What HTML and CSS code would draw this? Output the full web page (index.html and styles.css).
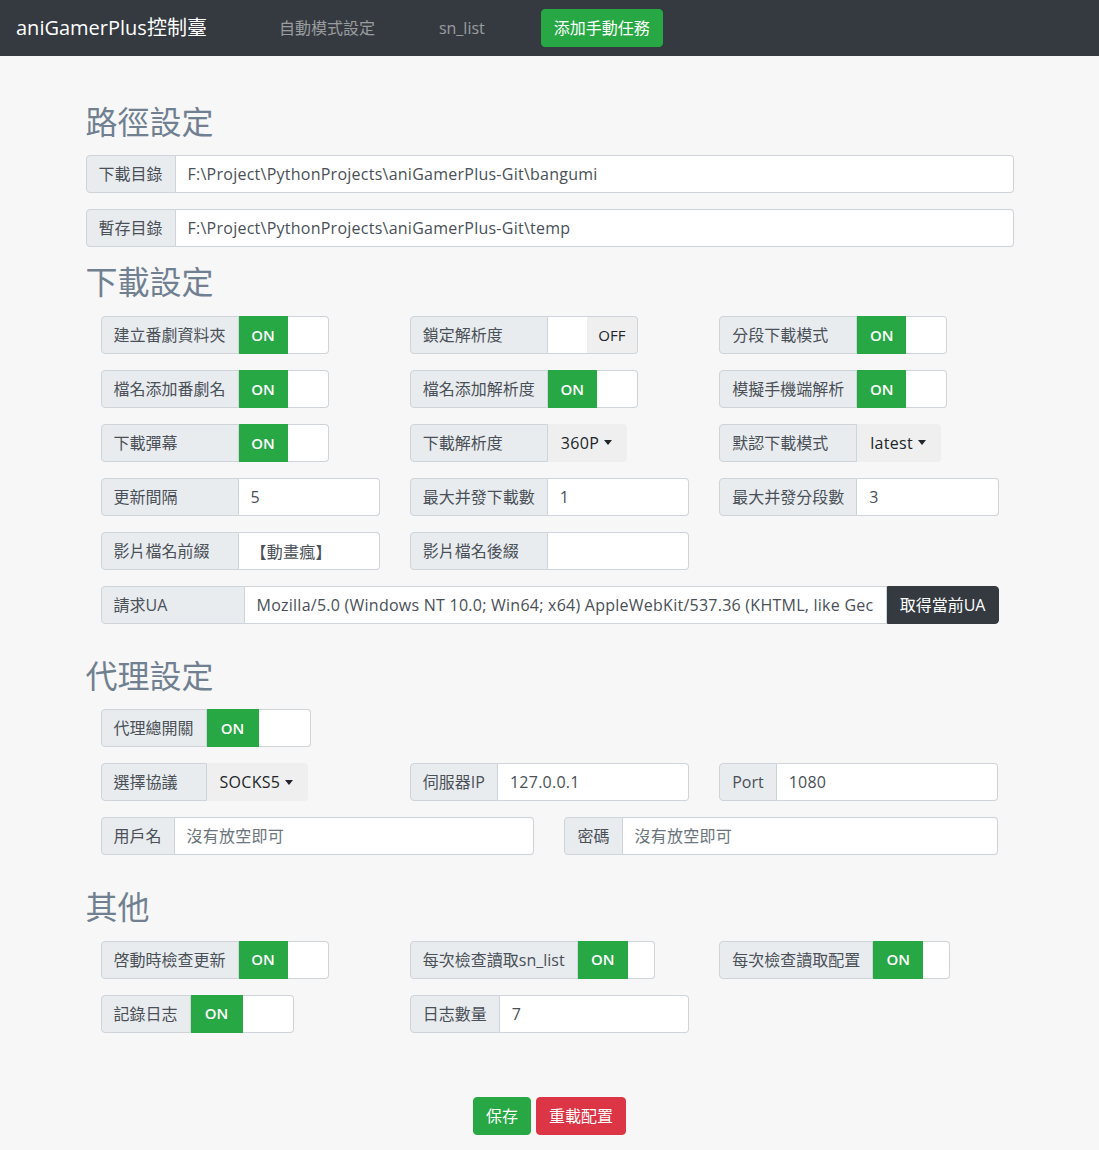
FILE: index.html
```html
<!DOCTYPE html>
<html lang="zh-Hant">
<head>
<meta charset="utf-8">
<title>aniGamerPlus控制臺</title>
<link rel="stylesheet" href="styles.css">
</head>
<body>
<nav class="navbar">
  <a class="brand" href="#">aniGamerPlus控制臺</a>
  <a class="nav-link" href="#">自動模式設定</a>
  <a class="nav-link" href="#">sn_list</a>
  <button class="btn btn-success nav-btn">添加手動任務</button>
</nav>

<main class="container">
  <section class="sec sec-path">
    <h2>路徑設定</h2>
    <div class="igroup">
      <span class="ig-label">下載目錄</span>
      <input class="ig-input" value="F:\Project\PythonProjects\aniGamerPlus-Git\bangumi">
    </div>
    <div class="igroup">
      <span class="ig-label">暫存目錄</span>
      <input class="ig-input" value="F:\Project\PythonProjects\aniGamerPlus-Git\temp">
    </div>
  </section>

  <section class="sec">
    <h2>下載設定</h2>
    <div class="grid grid3">
      <div class="igroup inline">
        <span class="ig-label w138">建立番劇資料夾</span>
        <span class="toggle tg-a"><span class="t-on">ON</span><span class="t-handle"></span></span>
      </div>
      <div class="igroup inline">
        <span class="ig-label w138">鎖定解析度</span>
        <span class="toggle tg-off"><span class="t-handle-l"></span><span class="t-off">OFF</span></span>
      </div>
      <div class="igroup inline">
        <span class="ig-label w138">分段下載模式</span>
        <span class="toggle tg-a"><span class="t-on">ON</span><span class="t-handle"></span></span>
      </div>

      <div class="igroup inline">
        <span class="ig-label w138">檔名添加番劇名</span>
        <span class="toggle tg-a"><span class="t-on">ON</span><span class="t-handle"></span></span>
      </div>
      <div class="igroup inline">
        <span class="ig-label w138">檔名添加解析度</span>
        <span class="toggle tg-a"><span class="t-on">ON</span><span class="t-handle"></span></span>
      </div>
      <div class="igroup inline">
        <span class="ig-label w138">模擬手機端解析</span>
        <span class="toggle tg-a"><span class="t-on">ON</span><span class="t-handle"></span></span>
      </div>

      <div class="igroup inline">
        <span class="ig-label w138">下載彈幕</span>
        <span class="toggle tg-a"><span class="t-on">ON</span><span class="t-handle"></span></span>
      </div>
      <div class="igroup inline">
        <span class="ig-label w138">下載解析度</span>
        <span class="dd">360P</span>
      </div>
      <div class="igroup inline">
        <span class="ig-label w138">默認下載模式</span>
        <span class="dd">latest</span>
      </div>

      <div class="igroup">
        <span class="ig-label w138">更新間隔</span>
        <input class="ig-input" value="5">
      </div>
      <div class="igroup">
        <span class="ig-label w138">最大并發下載數</span>
        <input class="ig-input" value="1">
      </div>
      <div class="igroup">
        <span class="ig-label w138">最大并發分段數</span>
        <input class="ig-input" value="3">
      </div>

      <div class="igroup">
        <span class="ig-label w138">影片檔名前綴</span>
        <input class="ig-input" value="【動畫瘋】">
      </div>
      <div class="igroup">
        <span class="ig-label w138">影片檔名後綴</span>
        <input class="ig-input" value="">
      </div>
      <div></div>

      <div class="igroup span-all">
        <span class="ig-label w144">請求UA</span>
        <input class="ig-input" value="Mozilla/5.0 (Windows NT 10.0; Win64; x64) AppleWebKit/537.36 (KHTML, like Gecko) Chrome/70.0.3538.102 Safari/537.36">
        <button class="btn btn-dark ig-btn">取得當前UA</button>
      </div>
    </div>
  </section>

  <section class="sec">
    <h2>代理設定</h2>
    <div class="grid grid6">
      <div class="igroup inline c2">
        <span class="ig-label w106">代理總開關</span>
        <span class="toggle tg-b"><span class="t-on">ON</span><span class="t-handle"></span></span>
      </div>
      <div class="c4"></div>

      <div class="igroup inline c2">
        <span class="ig-label w106">選擇協議</span>
        <span class="dd">SOCKS5</span>
      </div>
      <div class="igroup c2">
        <span class="ig-label">伺服器IP</span>
        <input class="ig-input" value="127.0.0.1">
      </div>
      <div class="igroup c2">
        <span class="ig-label">Port</span>
        <input class="ig-input" value="1080">
      </div>

      <div class="igroup c3">
        <span class="ig-label">用戶名</span>
        <input class="ig-input" placeholder="沒有放空即可">
      </div>
      <div class="igroup c3">
        <span class="ig-label">密碼</span>
        <input class="ig-input" placeholder="沒有放空即可">
      </div>
    </div>
  </section>

  <section class="sec">
    <h2>其他</h2>
    <div class="grid grid3">
      <div class="igroup inline">
        <span class="ig-label">啓動時檢查更新</span>
        <span class="toggle tg-a"><span class="t-on">ON</span><span class="t-handle"></span></span>
      </div>
      <div class="igroup inline">
        <span class="ig-label">每次檢查讀取sn_list</span>
        <span class="toggle tg-c"><span class="t-on">ON</span><span class="t-handle"></span></span>
      </div>
      <div class="igroup inline">
        <span class="ig-label">每次檢查讀取配置</span>
        <span class="toggle tg-c"><span class="t-on">ON</span><span class="t-handle"></span></span>
      </div>

      <div class="igroup inline">
        <span class="ig-label">記錄日志</span>
        <span class="toggle tg-d"><span class="t-on">ON</span><span class="t-handle"></span></span>
      </div>
      <div class="igroup">
        <span class="ig-label">日志數量</span>
        <input class="ig-input" value="7">
      </div>
    </div>
  </section>

  <div class="actions">
    <button class="btn btn-success">保存</button>
    <button class="btn btn-danger">重載配置</button>
  </div>
</main>
</body>
</html>
```

FILE: styles.css
```css
* { box-sizing: border-box; }
html, body { margin: 0; }
body {
  background: #f7f7f7;
  font-family: "Open Sans", "Noto Sans CJK TC", sans-serif;
  font-size: 16px;
  line-height: 1.5;
  color: #212529;
}

/* navbar */
.navbar {
  height: 56px;
  background: #343a40;
  display: flex;
  align-items: center;
  padding: 0 16px;
}
.brand {
  font-size: 20px;
  line-height: 30px;
  color: #fff;
  text-decoration: none;
  margin-right: 40px;
}
.nav-link {
  color: rgba(255, 255, 255, .5);
  text-decoration: none;
  padding: 0 32px;
  line-height: 24px;
}
.nav-btn { margin-left: 24px; }

/* buttons */
.btn {
  font-family: inherit;
  font-size: 16px;
  line-height: 24px;
  padding: 6px 12px;
  border: 1px solid transparent;
  border-radius: 4px;
  color: #fff;
  cursor: pointer;
}
.btn-success { background: #28a745; border-color: #28a745; }
.btn-danger { background: #dc3545; border-color: #dc3545; }
.btn-dark { background: #343a40; border-color: #343a40; }

/* layout */
.container {
  max-width: 958px;
  margin: 0 auto;
  padding: 47px 15px 16px;
}
h2 {
  font-size: 32px;
  line-height: 38.4px;
  font-weight: 400;
  color: #708090;
  margin: 0 0 14px;
}
.sec { margin-bottom: 33px; }
.sec-path { margin-bottom: 16px; }
.sec-path .igroup { margin-bottom: 16px; }
.sec-path .igroup:last-child { margin-bottom: 0; }

.grid {
  display: grid;
  padding: 0 15px;
  row-gap: 16px;
  column-gap: 30px;
}
.grid3 { grid-template-columns: repeat(3, minmax(0, 1fr)); }
.grid6 { grid-template-columns: repeat(6, minmax(0, 1fr)); }
.span-all { grid-column: 1 / -1; }
.c2 { grid-column: span 2; }
.c3 { grid-column: span 3; }
.c4 { grid-column: span 4; }

/* input group */
.igroup {
  display: flex;
  height: 38px;
  min-width: 0;
}
.igroup.inline { justify-self: start; }
.ig-label {
  display: flex;
  align-items: center;
  flex: none;
  padding: 6px 12px;
  background: #e9ecef;
  border: 1px solid #ced4da;
  border-radius: 4px 0 0 4px;
  color: #495057;
  white-space: nowrap;
}
.w106 { width: 106px; }
.w138 { width: 138px; }
.w144 { width: 144px; }
.ig-input {
  flex: 1 1 0;
  width: 0;
  min-width: 0;
  height: 38px;
  padding: 6px 12px;
  font-family: inherit;
  font-size: 16px;
  line-height: 24px;
  letter-spacing: 0.25px;
  color: #495057;
  background: #fff;
  border: 1px solid #ced4da;
  border-left: 0;
  border-radius: 0 4px 4px 0;
  outline: none;
}
.ig-input::placeholder { color: #6c757d; opacity: 1; }
.ig-btn {
  flex: none;
  border-radius: 0 4px 4px 0;
  height: 38px;
}
.igroup .ig-input:not(:last-child) { border-radius: 0; }

/* toggles */
.toggle {
  display: flex;
  height: 38px;
}
.t-on {
  display: flex;
  align-items: center;
  justify-content: center;
  background: #28a745;
  color: #fff;
  font-weight: 600;
  font-size: 15px;
}
.t-handle {
  background: #fff;
  border: 1px solid #ced4da;
  border-left: 0;
  border-radius: 0 4px 4px 0;
}
.t-handle-l {
  background: #fff;
  border-top: 1px solid #ced4da;
  border-bottom: 1px solid #ced4da;
}
.t-off {
  display: flex;
  align-items: center;
  justify-content: center;
  background: #efefef;
  border: 1px solid #ced4da;
  border-left: 0;
  border-radius: 0 4px 4px 0;
  color: #212529;
  font-size: 15px;
}
.tg-a .t-on { width: 49px; }
.tg-a .t-handle { width: 41px; }
.tg-b .t-on { width: 52px; }
.tg-b .t-handle { width: 52px; }
.tg-c .t-on { width: 50px; }
.tg-c .t-handle { width: 27px; }
.tg-d .t-on { width: 52px; }
.tg-d .t-handle { width: 51px; }
.tg-off .t-handle-l { width: 39px; }
.tg-off .t-off { width: 51px; }

/* dropdown */
.dd {
  display: flex;
  align-items: center;
  padding: 6px 15px 6px 13px;
  background: #efefef;
  border-radius: 0 4px 4px 0;
  color: #212529;
  letter-spacing: 0.3px;
}
.dd::after {
  content: "";
  margin-left: 5px;
  border-top: 5px solid #212529;
  border-left: 4px solid transparent;
  border-right: 4px solid transparent;
}

/* bottom actions */
.actions {
  display: flex;
  justify-content: center;
  gap: 5px;
  margin-top: 64px;
}
```
